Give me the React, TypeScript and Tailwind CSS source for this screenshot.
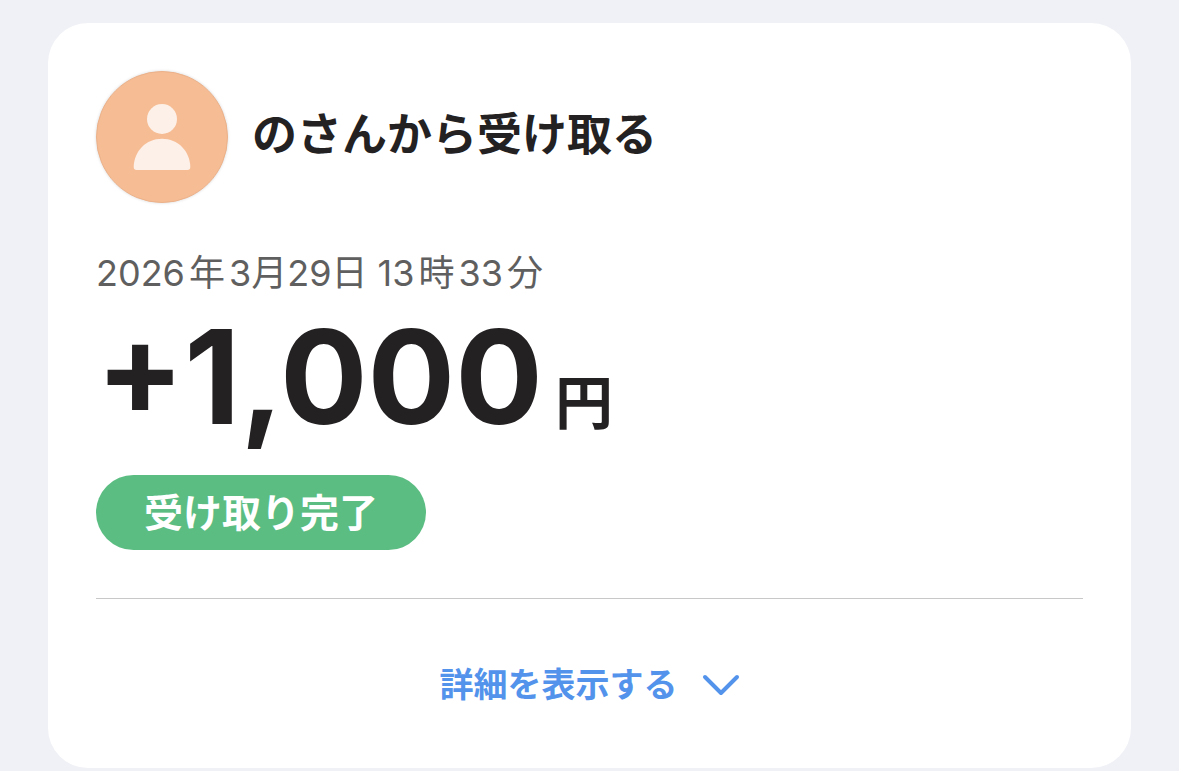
import React, { useState } from 'react';

const TRANSACTION = {
  title: 'のさんから受け取る',
  amount: '+1,000',
  unit: '円',
  status: '受け取り完了'
};

const Avatar: React.FC = () => (
  <div className="w-33 h-33 shrink-0 rounded-full bg-[#f6bd94] border border-[#ecb189] shadow-[0_0_3px_rgba(0,0,0,0.15)] flex items-center justify-center">
    <svg viewBox="0 0 58 68" className="w-[58px] h-[68px]" fill="#fdf0e8" aria-hidden="true">
      <circle cx="29" cy="16" r="15" />
      <path d="M0.7 64C1 48 13 35.7 29 35.7S57 48 57.3 64Q57.3 67 54.3 67H3.7Q0.7 67 0.7 64Z" />
    </svg>
  </div>
);

const App: React.FC = () => {
  const [open, setOpen] = useState(false);

  return (
    <div className="min-h-screen bg-[#f0f1f6] px-12 pt-[23px] pb-[3px] font-['Inter','Noto_Sans_CJK_JP',sans-serif] text-[#242122]">
      <main className="bg-white rounded-[40px] px-12 pt-12 pb-[61px]">
        <div className="flex items-center gap-6">
          <Avatar />
          <h1 className="pb-1 text-[45px] leading-[60px] font-bold">{TRANSACTION.title}</h1>
        </div>

        <p className="mt-12 text-[36px] leading-[44px] text-[#5f5f5f]">
          2026<span className="mx-1">年</span>3月29日 13<span className="mx-1">時</span>33<span className="ml-1">分</span>
        </p>

        <p className="mt-4 flex items-baseline gap-3 font-bold">
          <span className="text-[130px] leading-[132px]">{TRANSACTION.amount}</span>
          <span className="text-[58px] leading-[60px]">{TRANSACTION.unit}</span>
        </p>

        <div className="mt-8 flex">
          <span className="rounded-full bg-[#5bbd82] px-12 py-3 text-[39px] leading-[51px] font-bold text-white">
            {TRANSACTION.status}
          </span>
        </div>

        <div className="mt-12 border-t border-[#c8c8c8] pt-16 flex justify-center">
          <button
            type="button"
            aria-expanded={open}
            onClick={() => setOpen(!open)}
            className="flex items-center gap-6 text-[34px] leading-[44px] font-bold text-[#5393ec]"
          >
            詳細を表示する
            <svg viewBox="0 0 38 22" className="w-[38px] h-[22px]" fill="none" stroke="currentColor" strokeWidth="4" strokeLinecap="round" strokeLinejoin="round" aria-hidden="true">
              <path d="M3 3L19 19L35 3" />
            </svg>
          </button>
        </div>
      </main>
    </div>
  );
};

export default App;
